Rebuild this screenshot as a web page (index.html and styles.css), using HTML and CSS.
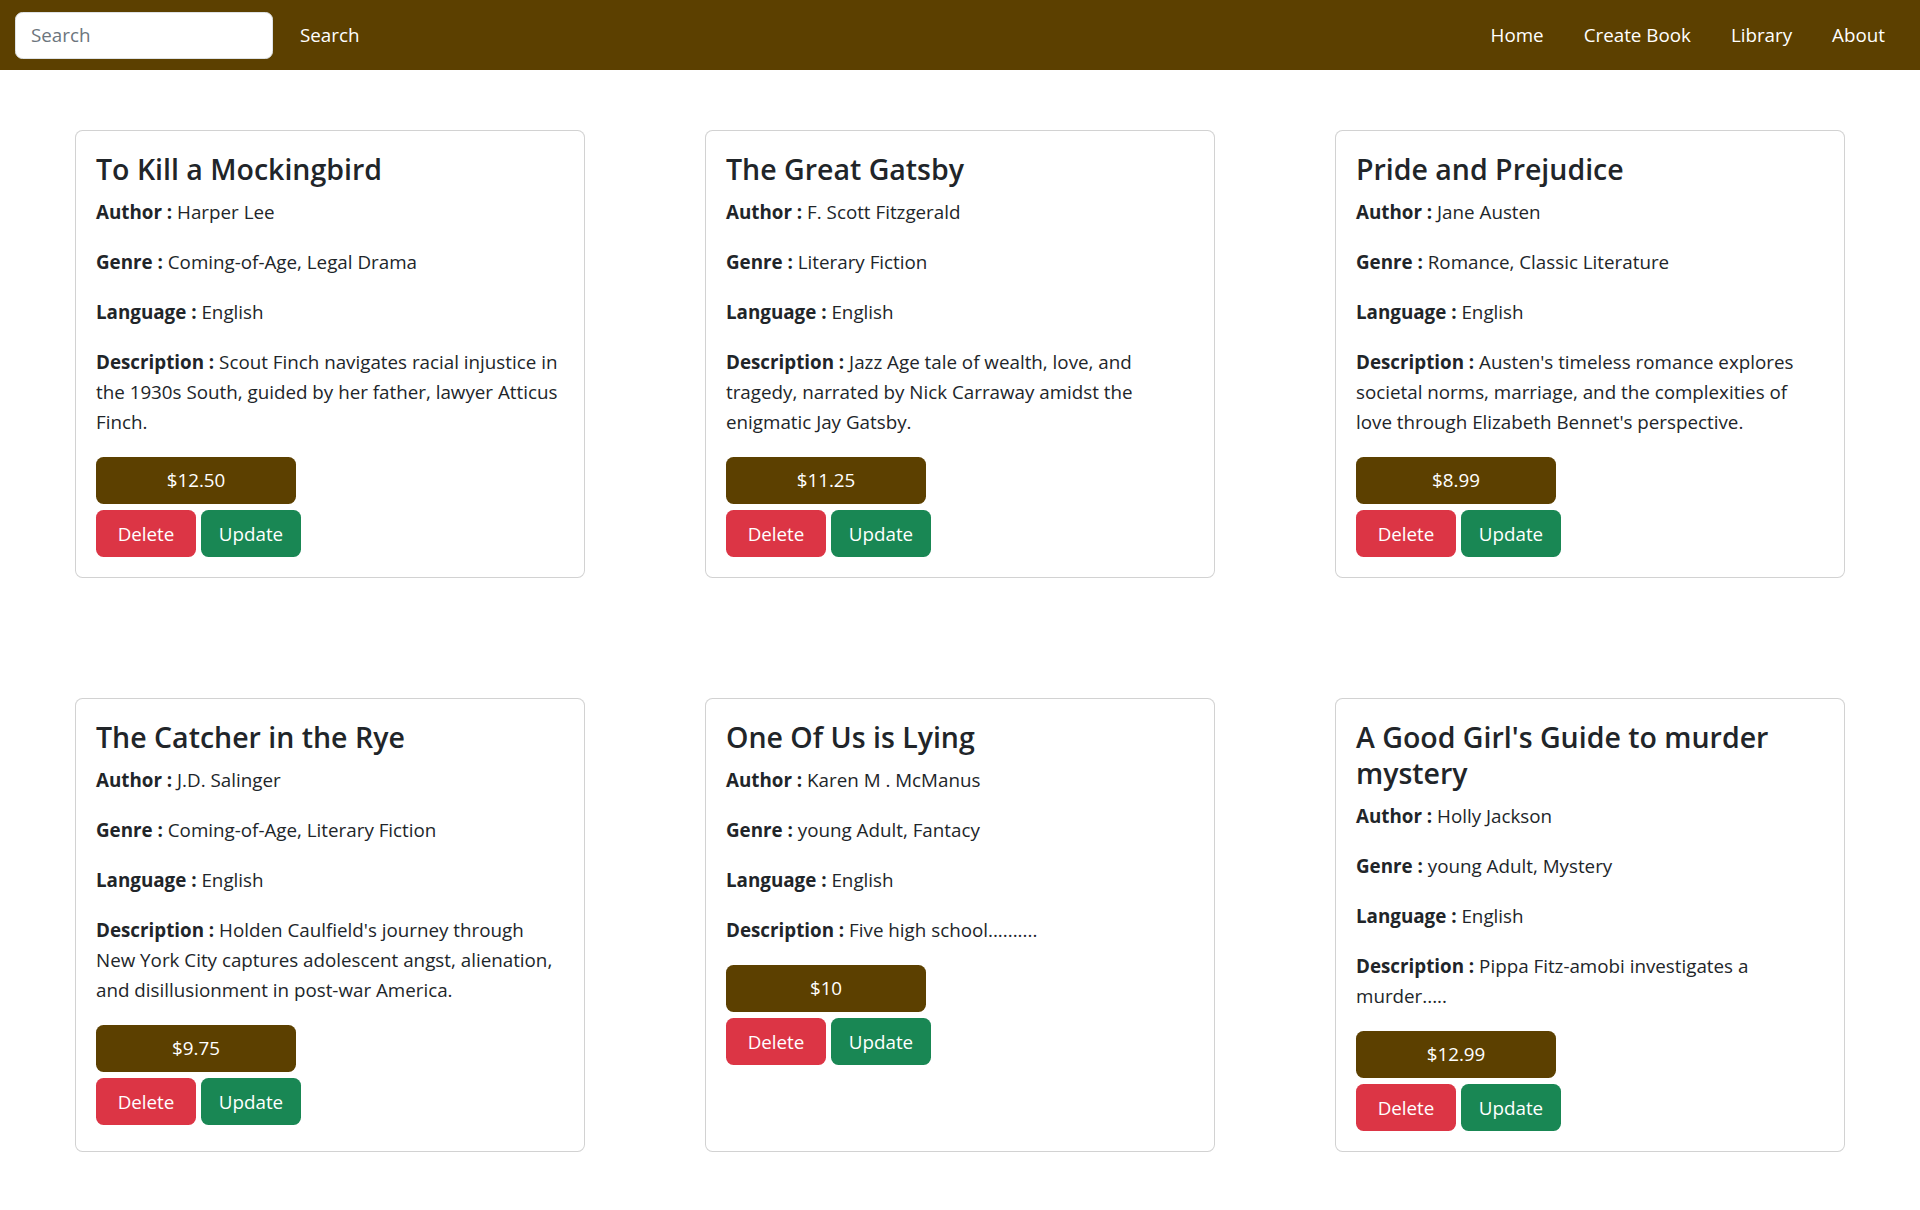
FILE: index.html
```html
<!DOCTYPE html>
<html lang="en">
<head>
<meta charset="utf-8">
<title>Library</title>
<link rel="stylesheet" href="styles.css">
</head>
<body>
<nav class="topbar">
  <form class="search">
    <input class="search-input" type="text" placeholder="Search">
    <button class="search-btn" type="button">Search</button>
  </form>
  <ul class="nav-links">
    <li><a href="#">Home</a></li>
    <li><a href="#">Create Book</a></li>
    <li><a href="#">Library</a></li>
    <li><a href="#">About</a></li>
  </ul>
</nav>

<main class="books">
  <div class="card">
    <h4 class="card-title">To Kill a Mockingbird</h4>
    <p><b>Author : </b>Harper Lee</p>
    <p><b>Genre : </b>Coming-of-Age, Legal Drama</p>
    <p><b>Language : </b>English</p>
    <p><b>Description : </b>Scout Finch navigates racial injustice in the 1930s South, guided by her father, lawyer Atticus Finch.</p>
    <div class="price">$12.50</div>
    <div class="actions"><button class="btn btn-del">Delete</button><button class="btn btn-upd">Update</button></div>
  </div>
  <div class="card">
    <h4 class="card-title">The Great Gatsby</h4>
    <p><b>Author : </b>F. Scott Fitzgerald</p>
    <p><b>Genre : </b>Literary Fiction</p>
    <p><b>Language : </b>English</p>
    <p><b>Description : </b>Jazz Age tale of wealth, love, and tragedy, narrated by Nick Carraway amidst the enigmatic Jay Gatsby.</p>
    <div class="price">$11.25</div>
    <div class="actions"><button class="btn btn-del">Delete</button><button class="btn btn-upd">Update</button></div>
  </div>
  <div class="card">
    <h4 class="card-title">Pride and Prejudice</h4>
    <p><b>Author : </b>Jane Austen</p>
    <p><b>Genre : </b>Romance, Classic Literature</p>
    <p><b>Language : </b>English</p>
    <p><b>Description : </b>Austen's timeless romance explores societal norms, marriage, and the complexities of love through Elizabeth Bennet's perspective.</p>
    <div class="price">$8.99</div>
    <div class="actions"><button class="btn btn-del">Delete</button><button class="btn btn-upd">Update</button></div>
  </div>
  <div class="card">
    <h4 class="card-title">The Catcher in the Rye</h4>
    <p><b>Author : </b>J.D. Salinger</p>
    <p><b>Genre : </b>Coming-of-Age, Literary Fiction</p>
    <p><b>Language : </b>English</p>
    <p><b>Description : </b>Holden Caulfield's journey through New York City captures adolescent angst, alienation, and disillusionment in post-war America.</p>
    <div class="price">$9.75</div>
    <div class="actions"><button class="btn btn-del">Delete</button><button class="btn btn-upd">Update</button></div>
  </div>
  <div class="card">
    <h4 class="card-title">One Of Us is Lying</h4>
    <p><b>Author : </b>Karen M . McManus</p>
    <p><b>Genre : </b>young Adult, Fantacy</p>
    <p><b>Language : </b>English</p>
    <p><b>Description : </b>Five high school..........</p>
    <div class="price">$10</div>
    <div class="actions"><button class="btn btn-del">Delete</button><button class="btn btn-upd">Update</button></div>
  </div>
  <div class="card">
    <h4 class="card-title">A Good Girl's Guide to murder mystery</h4>
    <p><b>Author : </b>Holly Jackson</p>
    <p><b>Genre : </b>young Adult, Mystery</p>
    <p><b>Language : </b>English</p>
    <p><b>Description : </b>Pippa Fitz-amobi investigates a murder.....</p>
    <div class="price">$12.99</div>
    <div class="actions"><button class="btn btn-del">Delete</button><button class="btn btn-upd">Update</button></div>
  </div>
</main>
</body>
</html>
```
FILE: styles.css
```css
* { box-sizing: border-box; }

body {
  margin: 0;
  font-family: "Open Sans", "Noto Sans", sans-serif;
  font-size: 18.8px;
  line-height: 30px;
  color: #212529;
  background: #fff;
}

/* ---------- top bar ---------- */
.topbar {
  height: 70px;
  background: #5c4000;
  display: flex;
  align-items: center;
  justify-content: space-between;
  padding: 0 15px;
}

.search {
  display: flex;
  align-items: center;
  margin: 0;
}

.search-input {
  width: 258px;
  height: 47px;
  border: 1px solid #dee2e6;
  border-radius: 7.5px;
  padding: 0 15px;
  font-family: inherit;
  font-size: 18.8px;
  color: #212529;
  background: #fff;
  outline: none;
}
.search-input::placeholder { color: #6c757d; }

.search-btn {
  margin-left: 11px;
  height: 47px;
  padding: 0 15px;
  background: transparent;
  border: 1px solid transparent;
  color: #fff;
  font-family: inherit;
  font-size: 18.8px;
  cursor: pointer;
}

.nav-links {
  display: flex;
  list-style: none;
  margin: 0;
  padding: 0;
}
.nav-links a {
  display: block;
  padding: 0 20px;
  color: #fff;
  text-decoration: none;
  font-size: 18.8px;
  line-height: 30px;
}

/* ---------- cards ---------- */
.books {
  display: grid;
  grid-template-columns: repeat(3, 1fr);
  padding: 0 15px;
}

.card {
  margin: 60px;
  border: 1px solid rgba(0, 0, 0, 0.175);
  border-radius: 7.5px;
  padding: 20px;
  background: #fff;
}

.card-title {
  margin: 0 0 10px;
  font-size: 28.5px;
  font-weight: 600;
  line-height: 36px;
}

.card p {
  margin: 0 0 20px;
}
.card p b { font-weight: 700; }

.price {
  width: 200px;
  height: 47px;
  line-height: 47px;
  text-align: center;
  background: #5c4000;
  color: #fff;
  border-radius: 7.5px;
}

.actions {
  display: flex;
  gap: 5px;
  margin-top: 6px;
}

.btn {
  width: 100px;
  height: 47px;
  border: none;
  border-radius: 7.5px;
  color: #fff;
  font-family: inherit;
  font-size: 18.8px;
  cursor: pointer;
}
.btn-del { background: #dc3545; }
.btn-upd { background: #198754; }
```
